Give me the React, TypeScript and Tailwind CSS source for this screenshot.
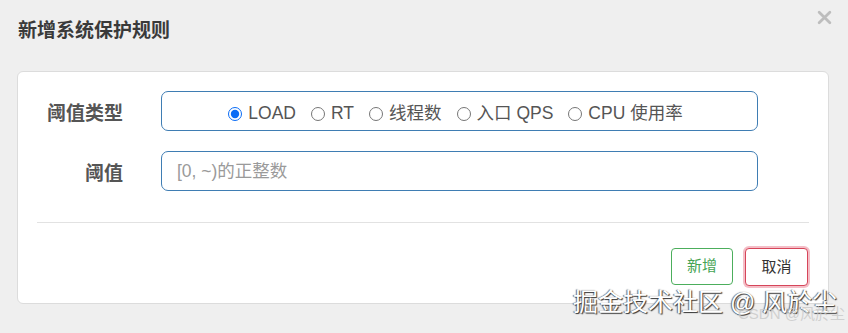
import React from "react";

const types = ["LOAD", "RT", "线程数", "入口 QPS", "CPU 使用率"];

const font = "font-['Liberation_Sans','Noto_Sans_CJK_SC',sans-serif]";

export default function App() {
    return (
        <div className={`relative h-[333px] w-[848px] overflow-hidden bg-[#efefef] ${font}`}>
            {/* header */}
            <div className="flex items-start justify-between pl-[18px] pr-[16px] pt-[18px]">
                <h4 className="text-[19px] font-bold leading-[26px] text-[#3a3a3a]">新增系统保护规则</h4>
                <svg viewBox="0 0 14 14" className="mt-[-8px] h-[15px] w-[15px]" aria-hidden="true">
                    <path d="M2 2L12 12M12 2L2 12" stroke="#bdbdbd" strokeWidth={2.6} strokeLinecap="round" />
                </svg>
            </div>

            {/* body panel */}
            <div className="ml-[17px] mt-[27px] h-[233px] w-[812px] rounded-[6px] border border-[#dcdcdc] bg-white px-[19px] pt-[19px]">
                <div className="flex items-center">
                    <label className="w-[86px] pt-[6px] text-right text-[19px] font-bold text-[#555]">阈值类型</label>
                    <div className="ml-[38px] flex h-[40px] w-[597px] items-center justify-center rounded-[7px] border border-[#3f7db3] pr-[8px] pt-[5px] text-[17.5px] text-[#555]">
                        {types.map((t, i) => (
                            <label key={t} className="mr-[15px] flex items-center last:mr-0">
                                <input
                                    type="radio"
                                    name="type"
                                    defaultChecked={i === 0}
                                    className="m-0 mr-[6px] h-[14px] w-[14px] accent-[#0a6cf5]"
                                />
                                {t}
                            </label>
                        ))}
                    </div>
                </div>

                <div className="mt-[20px] flex items-center">
                    <label className="w-[86px] pt-[6px] text-right text-[19px] font-bold text-[#555]">阈值</label>
                    <input
                        placeholder="[0, ~)的正整数"
                        className="ml-[38px] h-[40px] w-[597px] rounded-[7px] border border-[#3f7db3] bg-white px-[15px] pt-[1px] text-[17.5px] text-[#555] outline-none placeholder:text-[#9a9a9a]"
                    />
                </div>

                <div className="mt-[31px] h-px bg-[#e2e2e2]" />

                <div className="mt-[25px] flex justify-end gap-[12px] pr-[1px]">
                    <button className="h-[37px] w-[62px] rounded-[4px] border border-[#4cae5c] bg-white text-[15px] text-[#45a455]">
                        新增
                    </button>
                    <button className="h-[38px] w-[63px] rounded-[4px] border border-[#d6455a] bg-white text-[15px] text-[#333] shadow-[0_0_0_2px_rgba(230,110,130,0.45)]">
                        取消
                    </button>
                </div>
            </div>

            {/* watermark */}
            <div className="absolute left-[573px] top-[285px] whitespace-nowrap text-[25px] leading-[34px] text-white [text-shadow:1px_1px_1px_#333,-1px_0_1px_#666]">
                掘金技术社区 @ 风於尘
            </div>
            <div className="absolute left-[738px] top-[304px] whitespace-nowrap text-[15px] leading-[20px] text-[#c8c8c8]/80">
                CSDN @风於尘
            </div>
        </div>
    );
}
